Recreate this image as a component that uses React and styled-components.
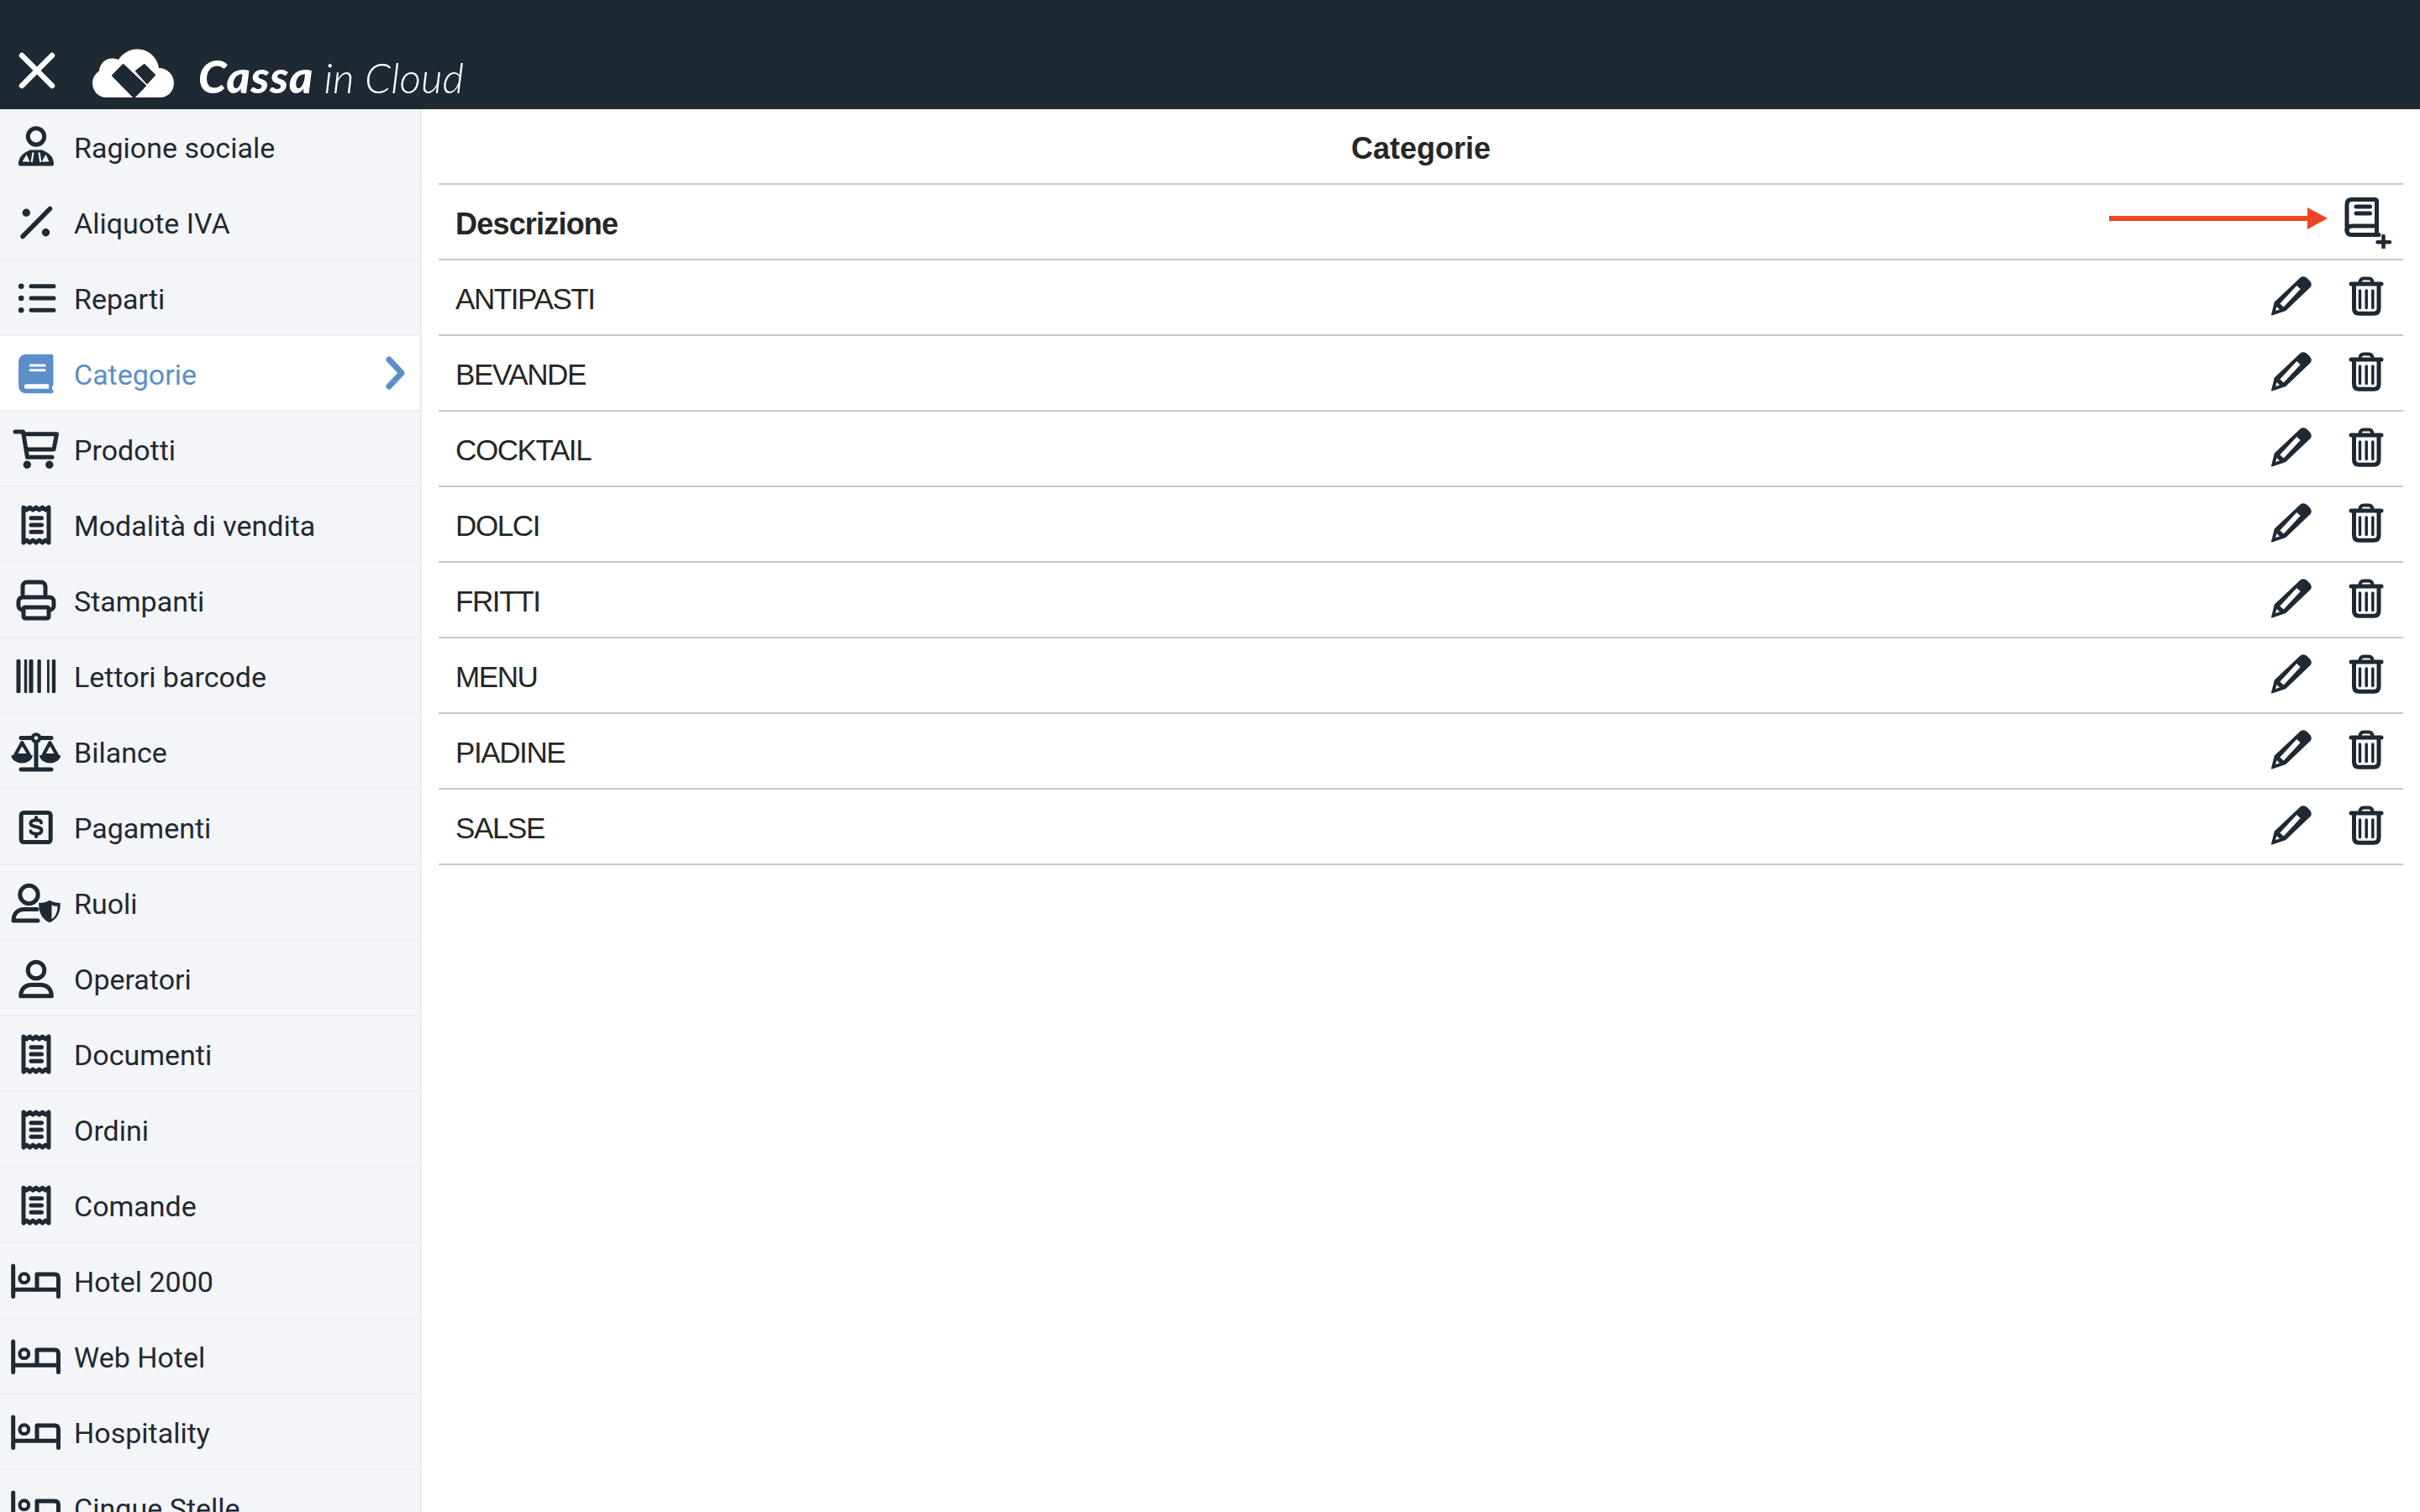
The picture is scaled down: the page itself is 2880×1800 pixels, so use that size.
import React from 'react';
import styled, { createGlobalStyle } from 'styled-components';

const Global = createGlobalStyle`
  html, body { margin: 0; padding: 0; background: #fff; }
  #root { width: 2880px; height: 1800px; }
`;

const Page = styled.div`
  width: 2880px; height: 1800px; overflow: hidden;
  display: flex; flex-direction: column; background: #fff;
`;
const TopBar = styled.header`
  height: 130px; flex: none; background: #1f2933; color: #fff;
  display: flex; align-items: flex-start;
`;
const CloseIcon = styled.svg`
  width: 44px; height: 44px; margin: 62px 0 0 22px; flex: none;
  fill: none; stroke: #fff; stroke-width: 6.5; stroke-linecap: round;
`;
const LogoMark = styled.svg`
  width: 97px; height: 60px; margin: 56px 0 0 44px; flex: none;
`;
const Brand = styled.div`
  margin: 56px 0 0 29px; font-family: Lato, sans-serif; font-size: 49.5px; line-height: 70px;
  font-style: italic; font-weight: 300; white-space: pre;
`;
const BrandStrong = styled.span`
  font-weight: 900; font-size: 54px; letter-spacing: 0.7px;
`;
const Body = styled.div`
  flex: 1; display: flex; min-height: 0;
`;
const Sidebar = styled.nav`
  width: 502px; flex: none; box-sizing: border-box; overflow: hidden;
  background: #f4f5f9; border-right: 2px solid #e8ebf0;
`;
const NavRow = styled.div`
  height: 90px; box-sizing: border-box; border-bottom: 2px solid #eceef2;
  display: flex; align-items: center; padding: 0 18px 0 11px;
  background: ${p => (p.$active ? '#fff' : 'transparent')};
  color: ${p => (p.$active ? '#5b8fc9' : '#1f2933')};
  font-family: Roboto, sans-serif; font-size: 34px;
`;
const NavLabel = styled.span`
  margin-left: 13px; padding-top: 4px; flex: 1; white-space: nowrap;
`;
const Glyph = styled.svg`
  width: 64px; height: 64px; flex: none; color: inherit;
  fill: none; stroke: currentColor; stroke-width: 5; stroke-linecap: round; stroke-linejoin: round;
`;
const Chevron = styled.svg`
  width: 24px; height: 40px; flex: none;
  fill: none; stroke: currentColor; stroke-width: 7; stroke-linecap: round; stroke-linejoin: round;
`;
const Main = styled.main`
  flex: 1; padding: 0 20px; min-width: 0;
  color: #262626; font-family: "Liberation Sans", Arial, sans-serif; font-size: 36px;
`;
const Title = styled.div`
  height: 90px; box-sizing: border-box; border-bottom: 2px solid #c8c8c8; padding-top: 6px;
  display: flex; align-items: center; justify-content: center; font-weight: 700;
`;
const TableRow = styled.div`
  position: relative; height: 90px; box-sizing: border-box; border-bottom: 2px solid #c8c8c8;
  display: flex; align-items: center; padding: 0 12px 0 20px; color: #262626;
`;
const HeadCell = styled.span`
  flex: 1; padding-top: 6px; font-weight: 700; letter-spacing: -0.8px;
`;
const Cell = styled.span`
  flex: 1; padding-top: 4px; font-size: 35px; letter-spacing: -1.4px;
`;
const Actions = styled.div`
  display: flex; gap: 24px; color: #1f2933;
`;
const Pointer = styled.svg`
  position: absolute; right: 90px; top: 27px; width: 260px; height: 26px;
`;

const Fill = p => <path fill="currentColor" stroke="none" {...p} />;
const Dot = p => <circle fill="currentColor" stroke="none" {...p} />;

const icons = {
  manager: (
    <>
      <circle cx="32" cy="20.5" r="9.7" />
      <Fill fillRule="evenodd" d="M13 55.5a2 2 0 0 1-2-2C11 45 16 40 25 36.5H39C48 40 53 45 53 53.5a2 2 0 0 1-2 2zM20.5 42l-5 8.500h9zM43.500 42l-5 8.500h9z" />
      <path d="M28.500 39.500 26.700 51M35.500 39.500 37.300 51" stroke="#f4f5f9" strokeWidth="2.200" strokeLinecap="butt" />
    </>
  ),
  percent: (
    <>
      <path d="M16 49.500 48.500 16.500" strokeWidth="5.500" />
      <Dot cx="20.300" cy="21.300" r="4.700" />
      <Dot cx="43.500" cy="44.700" r="4.700" />
    </>
  ),
  list: (
    <>
      <Dot cx="14.200" cy="18.700" r="3.300" /><Dot cx="14.200" cy="33" r="3.300" /><Dot cx="14.200" cy="47.300" r="3.300" />
      <path d="M26 18.700H53M26 33H53M26 47.300H53" />
    </>
  ),
  bookSolid: (
    <Fill fillRule="evenodd" d="M20 9.700h30a2.500 2.500 0 0 1 2.500 2.500v33.500a2.500 2.500 0 0 1-1.500 2.300v3.500c1 .5 1.500 1.200 1.500 2.300a2.500 2.500 0 0 1-2.500 2.500H20a9 9 0 0 1-9-9V18.700a9 9 0 0 1 9-9zM25 21.500h17a1.500 1.500 0 0 1 0 3H25a1.500 1.500 0 0 1 0-3zM25 27.300h17a1.500 1.500 0 0 1 0 3H25a1.500 1.500 0 0 1 0-3zM20.500 45.300H47v5.400H20.500a2.700 2.700 0 0 1 0-5.400z" />
  ),
  cart: (
    <>
      <path d="M7 12H16.500L21.500 42.300H51" />
      <path d="M18 14.700H56.500L53 33H21" />
      <Dot cx="21.300" cy="51.300" r="4.700" /><Dot cx="47.800" cy="51.300" r="4.700" />
    </>
  ),
  receipt: (
    <>
      <path d="M17 12l3.750 3 3.750-3 3.750 3 3.750-3 3.750 3 3.750-3 3.750 3L47 12V54l-3.750-3-3.750 3-3.750-3-3.750 3-3.750-3-3.750 3-3.750-3L17 54z" />
      <path d="M26 24.700H38.500M26 33H38.500M26 41.300H38.500" />
    </>
  ),
  printer: (
    <>
      <path d="M16 25V16a5 5 0 0 1 5-5H38a5 5 0 0 1 5 5V25" />
      <rect x="11" y="29" width="42" height="15" rx="5" />
      <rect x="17" y="41" width="30" height="13" rx="2" fill="#f4f5f9" />
    </>
  ),
  barcode: (
    <Fill d="M10 13h2a1.500 1.500 0 0 1 1.500 1.500v37a1.500 1.500 0 0 1-1.500 1.500h-2a1.500 1.500 0 0 1-1.500-1.500v-37A1.500 1.500 0 0 1 10 13zM19 13h1a1.200 1.200 0 0 1 1.200 1.200v37.600A1.200 1.200 0 0 1 20 53h-1a1.200 1.200 0 0 1-1.200-1.200V14.200A1.200 1.200 0 0 1 19 13zM25 13h2a1.500 1.500 0 0 1 1.500 1.500v37a1.500 1.500 0 0 1-1.500 1.500h-2a1.500 1.500 0 0 1-1.500-1.500v-37A1.500 1.500 0 0 1 25 13zM35 13h1.300a1.500 1.500 0 0 1 1.500 1.500v37a1.500 1.500 0 0 1-1.500 1.500H35a1.500 1.500 0 0 1-1.500-1.500v-37A1.500 1.500 0 0 1 35 13zM46.300 13h.2a1.300 1.300 0 0 1 1.300 1.300v37.400a1.300 1.300 0 0 1-1.300 1.300h-.2a1.300 1.300 0 0 1-1.300-1.300V14.300a1.300 1.300 0 0 1 1.300-1.300zM52.300 13h1.400a1.500 1.500 0 0 1 1.500 1.500v37a1.500 1.500 0 0 1-1.500 1.500h-1.400a1.500 1.500 0 0 1-1.500-1.500v-37a1.500 1.500 0 0 1 1.500-1.500z" />
  ),
  scale: (
    <>
      <path d="M14 16.500H50M32 20V54M14 54H50" />
      <circle cx="32" cy="16.500" r="4.300" fill="#f4f5f9" strokeWidth="4" />
      <path d="M15.200 22 7 37H24z M48.500 22 40.500 37H57z" strokeWidth="4" />
      <Fill d="M2.500 37H27.800A12.650 9.500 0 0 1 2.500 37z M36.200 37H61A12.400 9.500 0 0 1 36.200 37z" />
    </>
  ),
  dollar: (
    <>
      <rect x="14.200" y="15.500" width="35" height="35" rx="3" />
      <path d="M38 27.500c0-2-2.500-3.300-6-3.300s-6.500 1.300-6.500 4c0 5.500 13 2.500 13 8.500 0 2.800-3 4-6.500 4s-6.500-1.300-6.500-3.300" strokeWidth="4" />
      <path d="M32 21V24M32 41V44" strokeWidth="4" />
    </>
  ),
  role: (
    <>
      <circle cx="23.500" cy="23" r="10.700" />
      <path d="M34 54H5C5 45.500 10.500 40.500 18 40.500H33" />
      <Fill fillRule="evenodd" d="M48 29.700C52 32 56 33 60.800 33 61.300 44 57 52.500 48 56.300 39 52.500 34.700 44 35.200 33 40 33 44 32 48 29.700zM50.500 35.500V52.300C55 49.500 57.500 44 57.500 36.800 55 36.800 52.500 36.300 50.500 35.500z" />
    </>
  ),
  user: (
    <>
      <circle cx="32" cy="23" r="9.800" />
      <path d="M13.700 53.800H50.300C50.300 45 44.500 40.500 38 40.500H26C19.500 40.500 13.700 45 13.700 53.800z" />
    </>
  ),
  bed: (
    <>
      <path d="M4.700 15V51.500M4.700 43.300H58.500M58.500 51.500V29.500Q58.500 25 54 25H33V43" />
      <circle cx="17.800" cy="29.700" r="5.300" strokeWidth="4.200" />
    </>
  ),
};

const NavGlyph = ({ name }) => <Glyph viewBox="0 0 64 64">{icons[name]}</Glyph>;

const PencilIcon = () => (
  <Glyph viewBox="1.500 2 64 64">
    <Fill fillRule="evenodd" d="M9.500 55.500C8.800 55.600 8.400 55.200 8.500 54.500L12.300 39.500 43.300 10.200C46 8.500 49 9 51.500 11.500L54 14C56.500 16.500 56.800 19 55.500 21.500L25.700 50zM38.800 20 43.200 24 23.200 45.500 18.800 41.500zM15 45 13.500 50 18.500 48.500z" />
  </Glyph>
);
const TrashIcon = () => (
  <Glyph viewBox="0 2 64 64">
    <path d="M14 18H50" />
    <path d="M24.500 17Q24.500 11.500 29 11.500H35Q39.500 11.500 39.500 17" strokeWidth="4" />
    <path d="M17.500 19V47Q17.500 53.300 23.500 53.300H41Q47 53.300 47 47V19" />
    <path d="M24.500 26V46.500M32.200 26V46.500M39.800 26V46.500" strokeWidth="3.500" />
  </Glyph>
);
const BookPlusIcon = () => (
  <Glyph viewBox="0 0 64 64">
    <path d="M15 5.500H42Q44.500 5.500 44.500 8V37H16Q9 37 9 42.500V11.500Q9 5.500 15 5.500z" />
    <path d="M9 42Q9 47.500 14.500 47.500H47" />
    <path d="M44.500 37V47" />
    <path d="M20 14H36.500M20 22H36.500" />
    <path d="M52.500 49V63.500M45.500 56.300H60" strokeWidth="4.500" />
  </Glyph>
);

const nav = [
  ['Ragione sociale', 'manager'], ['Aliquote IVA', 'percent'], ['Reparti', 'list'], ['Categorie', 'bookSolid', true],
  ['Prodotti', 'cart'], ['Modalità di vendita', 'receipt'], ['Stampanti', 'printer'], ['Lettori barcode', 'barcode'],
  ['Bilance', 'scale'], ['Pagamenti', 'dollar'], ['Ruoli', 'role'], ['Operatori', 'user'],
  ['Documenti', 'receipt'], ['Ordini', 'receipt'], ['Comande', 'receipt'], ['Hotel 2000', 'bed'],
  ['Web Hotel', 'bed'], ['Hospitality', 'bed'], ['Cinque Stelle', 'bed'],
];
const categories = ['ANTIPASTI', 'BEVANDE', 'COCKTAIL', 'DOLCI', 'FRITTI', 'MENU', 'PIADINE', 'SALSE'];

export default function App() {
  return (
    <Page>
      <Global />
      <TopBar>
        <CloseIcon viewBox="0 0 44 44"><path d="M4 4 40 40M40 4 4 40" /></CloseIcon>
        <LogoMark viewBox="0 0 97 60">
          <path fill="#fff" d="M0 43a18 18 0 0 1 8-14.500A16 16 0 0 1 31 15 26 26 0 0 1 79 25a18 18 0 0 1 18 18c0 9-7 17-16 17H16C7 60 0 52 0 43z" />
          <path fill="#1f2933" stroke="#1f2933" strokeWidth="2" strokeLinejoin="round" d="M36.700 21 24 34 49.500 60 63 46z" />
          <path fill="#1f2933" stroke="#1f2933" strokeWidth="2" strokeLinejoin="round" d="M61.700 21 52 28.500 65 43 74 33.300z" />
        </LogoMark>
        <Brand><BrandStrong>Cassa</BrandStrong> in Cloud</Brand>
      </TopBar>
      <Body>
        <Sidebar>
          {nav.map(([label, icon, active]) => (
            <NavRow key={label} $active={active}>
              <NavGlyph name={icon} />
              <NavLabel>{label}</NavLabel>
              {active && <Chevron viewBox="0 0 24 40"><path d="M5 4 20 20 5 36" /></Chevron>}
            </NavRow>
          ))}
        </Sidebar>
        <Main>
          <Title>Categorie</Title>
          <TableRow>
            <HeadCell>Descrizione</HeadCell>
            <Pointer viewBox="0 0 260 26">
              <path d="M0 10H236V0L260 13 236 26V16H0z" fill="#ee4423" />
            </Pointer>
            <Actions><BookPlusIcon /></Actions>
          </TableRow>
          {categories.map(c => (
            <TableRow key={c}>
              <Cell>{c}</Cell>
              <Actions><PencilIcon /><TrashIcon /></Actions>
            </TableRow>
          ))}
        </Main>
      </Body>
    </Page>
  );
}
